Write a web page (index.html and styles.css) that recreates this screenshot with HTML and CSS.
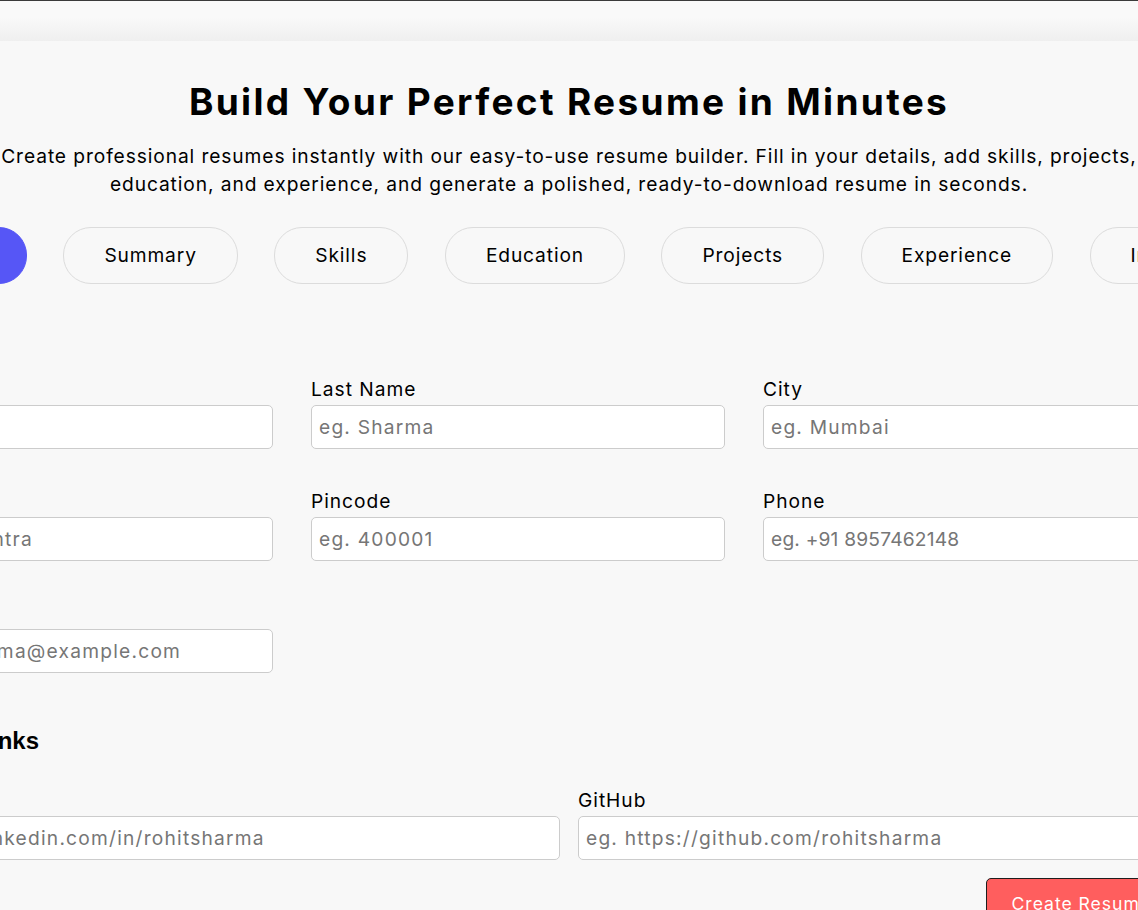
FILE: index.html
```html
<!DOCTYPE html>
<html lang="en">
<head>
<meta charset="utf-8">
<title>Resume Builder</title>
<link rel="stylesheet" href="styles.css">
</head>
<body>
<header class="topbar"></header>
<main class="page">
  <section class="hero">
    <h1 class="hero-title">Build Your Perfect Resume in Minutes</h1>
    <p class="hero-text">Create professional resumes instantly with our easy-to-use resume builder. Fill in your details, add skills, projects,<br>education, and experience, and generate a polished, ready-to-download resume in seconds.</p>
  </section>
  <section class="builder">
    <nav class="tabs">
      <button class="tab tab-active" type="button">Personal</button>
      <button class="tab" type="button">Summary</button>
      <button class="tab" type="button">Skills</button>
      <button class="tab" type="button">Education</button>
      <button class="tab" type="button">Projects</button>
      <button class="tab" type="button">Experience</button>
      <button class="tab" type="button">Internships</button>
      <button class="tab" type="button">Certifications</button>
    </nav>
    <form class="form">
      <div class="grid-3">
        <div class="field"><label>First Name</label><input type="text" placeholder="eg. Rohit"></div>
        <div class="field"><label>Last Name</label><input type="text" placeholder="eg. Sharma"></div>
        <div class="field"><label>City</label><input type="text" placeholder="eg. Mumbai"></div>
        <div class="field"><label>State</label><input type="text" placeholder="eg. Maharashtra"></div>
        <div class="field"><label>Pincode</label><input type="text" placeholder="eg. 400001"></div>
        <div class="field"><label>Phone</label><input type="text" class="input-phone" placeholder="eg. +91 8957462148"></div>
        <div class="field"><label>Email</label><input type="email" placeholder="eg. rohitsharma@example.com"></div>
      </div>
      <h3 class="section-title">Important Links</h3>
      <div class="grid-2">
        <div class="field"><label>LinkedIn</label><input type="text" placeholder="eg. https://linkedin.com/in/rohitsharma"></div>
        <div class="field"><label>GitHub</label><input type="text" placeholder="eg. https://github.com/rohitsharma"></div>
      </div>
      <div class="actions"><button class="submit" type="button">Create Resume</button></div>
    </form>
  </section>
</main>
</body>
</html>
```
FILE: styles.css
```css
html {
  scrollbar-width: none;
}

body {
  margin: 0;
  overflow-x: hidden;
  background: #f8f8f8;
  color: #000;
  font-family: Inter, "Open Sans", sans-serif;
  letter-spacing: 0.06em;
}

.topbar {
  height: 40px;
  border-top: 1px solid #3a3a3a;
  background: linear-gradient(#f9f9f9, #f9f9f9 40%, #efefef);
}

.page {
  display: flex;
  flex-direction: column;
  align-items: center;
}

.hero {
  width: 100%;
  text-align: center;
}

.hero-title {
  margin: 39px 0 18.6px;
  font-size: 37px;
  line-height: 43px;
  font-weight: 700;
  letter-spacing: 0.063em;
}

.hero-text {
  margin: 0;
  font-size: 19.2px;
  line-height: 28.8px;
  letter-spacing: 0.047em;
  white-space: nowrap;
}

.builder {
  width: 1420px;
  flex-shrink: 0;
  margin-top: 27.8px;
}

.tabs {
  display: flex;
  gap: 36.5px;
}

.tab {
  flex-shrink: 0;
  padding: 13px 40px;
  border: 1px solid #dcdcdc;
  border-radius: 28px;
  background: transparent;
  color: #000;
  font: inherit;
  font-size: 19.2px;
  line-height: 28.8px;
  letter-spacing: 0.045em;
  white-space: nowrap;
}

.tab-active {
  background: #5656f6;
  border-color: #5656f6;
  color: #fff;
}

.form {
  margin-top: 91px;
}

.grid-3 {
  display: grid;
  grid-template-columns: repeat(3, 414px);
  gap: 38px;
}

.grid-2 {
  display: grid;
  grid-template-columns: 1fr 1fr;
  gap: 18px;
}

.field label {
  display: block;
  margin-bottom: 1px;
  font-size: 19.2px;
  line-height: 29px;
}

.field input {
  display: block;
  box-sizing: border-box;
  width: 100%;
  height: 44px;
  padding: 0 7px;
  border: 1px solid #cccccc;
  border-radius: 5px;
  background: #fff;
  color: #000;
  font: inherit;
  font-size: 19.2px;
  letter-spacing: 0.063em;
}

.field .input-phone {
  letter-spacing: 0.01em;
}

.field input::placeholder {
  color: #767676;
}

.section-title {
  margin: 54px 0 31px;
  font-family: "Liberation Sans", Arial, sans-serif;
  font-size: 24px;
  font-weight: 700;
  letter-spacing: 0;
}

.actions {
  width: 1318px;
  display: flex;
  justify-content: flex-end;
  margin-top: 18px;
}

.submit {
  padding: 12px 25px;
  border: 1px solid #1e1e1e;
  border-radius: 5px;
  background: #ff5e5e;
  color: #fff;
  font: inherit;
  font-size: 17.6px;
  line-height: 26px;
  letter-spacing: inherit;
}
```
